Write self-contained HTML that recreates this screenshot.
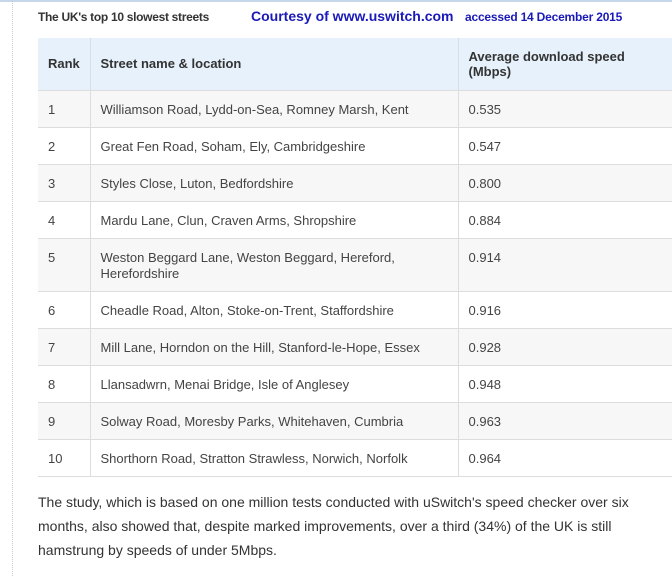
<!DOCTYPE html>
<html><head><style>
body{margin:0;width:672px;height:576px;overflow:hidden;background:#fff;font-family:"Liberation Sans",Arial,sans-serif;position:relative}
.topline{position:absolute;left:0;top:0;width:672px;height:2px;background:#c7d7ea}
.dots{position:absolute;left:12px;top:0;height:576px;border-left:1px dotted #ccc}
.title{position:absolute;left:38px;top:10px;font-size:12px;font-weight:bold;color:#333;letter-spacing:-0.3px}
.court{position:absolute;left:251px;top:8px;font-size:14px;font-weight:bold;color:#1a1ab8}
.acc{position:absolute;left:465px;top:10px;font-size:12px;font-weight:bold;color:#1a1ab8;letter-spacing:-0.2px}
table{position:absolute;left:38px;top:38px;width:640px;border-collapse:collapse;font-size:13px;color:#444;table-layout:fixed}
td,th{padding:0 0 0 10px;border-bottom:1px solid #ddd;vertical-align:top;text-align:left;box-sizing:border-box}
th{background:#e6f1fb;font-weight:bold;height:52px;vertical-align:middle;color:#333;line-height:15px}
td{height:37px;line-height:16px;padding-top:11px}
col.a{width:52px}col.b{width:368px}
td:nth-child(2),th:nth-child(2){border-left:1px solid #ddd}
td:nth-child(3),th:nth-child(3){border-left:1px solid #ddd}
tr:nth-child(even) td{background:#f7f7f7}
tr.tall td{height:53px}
p{position:absolute;left:38px;top:490px;width:630px;margin:0;font-size:14px;line-height:24px;color:#333}
</style></head><body>
<div class="topline"></div><div class="dots"></div>
<div class="title">The UK's top 10 slowest streets</div>
<div class="court">Courtesy of www.uswitch.com</div>
<div class="acc">accessed 14 December 2015</div>
<table>
<colgroup><col class="a"><col class="b"><col></colgroup>
<tr><th>Rank</th><th>Street name &amp; location</th><th>Average download speed<br>(Mbps)</th></tr>
<tr><td>1</td><td>Williamson Road, Lydd-on-Sea, Romney Marsh, Kent</td><td>0.535</td></tr>
<tr><td>2</td><td>Great Fen Road, Soham, Ely, Cambridgeshire</td><td>0.547</td></tr>
<tr><td>3</td><td>Styles Close, Luton, Bedfordshire</td><td>0.800</td></tr>
<tr><td>4</td><td>Mardu Lane, Clun, Craven Arms, Shropshire</td><td>0.884</td></tr>
<tr class="tall"><td>5</td><td>Weston Beggard Lane, Weston Beggard, Hereford,<br>Herefordshire</td><td>0.914</td></tr>
<tr><td>6</td><td>Cheadle Road, Alton, Stoke-on-Trent, Staffordshire</td><td>0.916</td></tr>
<tr><td>7</td><td>Mill Lane, Horndon on the Hill, Stanford-le-Hope, Essex</td><td>0.928</td></tr>
<tr><td>8</td><td>Llansadwrn, Menai Bridge, Isle of Anglesey</td><td>0.948</td></tr>
<tr><td>9</td><td>Solway Road, Moresby Parks, Whitehaven, Cumbria</td><td>0.963</td></tr>
<tr><td>10</td><td>Shorthorn Road, Stratton Strawless, Norwich, Norfolk</td><td>0.964</td></tr>
</table>
<p>The study, which is based on one million tests conducted with uSwitch's speed checker over six months, also showed that, despite marked improvements, over a third (34%) of the UK is still hamstrung by speeds of under 5Mbps.</p>
</body></html>
